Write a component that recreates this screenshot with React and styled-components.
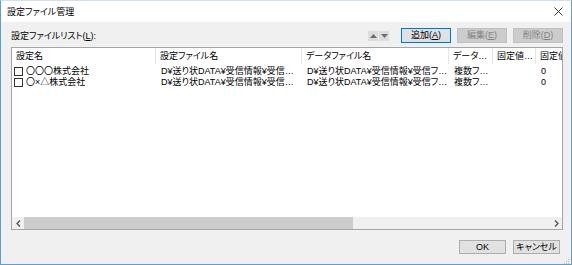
import React from 'react';
import styled, { createGlobalStyle } from 'styled-components';

const GlobalStyle = createGlobalStyle`
  html, body {
    margin: 0;
    padding: 0;
    background: #f0f0f0;
  }
  body {
    font-family: "Liberation Sans", "Noto Sans CJK JP", sans-serif;
    font-size: 9px;
    font-feature-settings: "palt";
    color: #000;
  }
`;

const columns = [
  { title: '設定名', width: 144 },
  { title: '設定ファイル名', width: 146 },
  { title: 'データファイル名', width: 147 },
  { title: 'データ選択方法', width: 44 },
  { title: '固定値区分', width: 43 },
  { title: '固定値', width: 60 },
];

const rows = [
  ['〇〇〇株式会社', 'D¥送り状DATA¥受信情報¥受信設定ファイル1.ini', 'D¥送り状DATA¥受信情報¥受信ファイル1.csv', '複数ファイル', '', '0'],
  ['〇×△株式会社', 'D¥送り状DATA¥受信情報¥受信設定ファイル2.ini', 'D¥送り状DATA¥受信情報¥受信ファイル2.csv', '複数ファイル', '', '0'],
];

const gridTemplate = columns.map((c) => `${c.width}px`).join(' ');

function App() {
  return (
    <>
      <GlobalStyle />
      <Window>
        <TitleBar>
          <Title>設定ファイル管理</Title>
          <CloseButton aria-label="閉じる">
            <svg width="9" height="9" viewBox="0 0 9 9">
              <path d="M0.5 0.5 L8.5 8.5 M8.5 0.5 L0.5 8.5" stroke="#222" strokeWidth="0.9" fill="none" />
            </svg>
          </CloseButton>
        </TitleBar>
        <Body>
          <Toolbar>
            <ListLabel>設定ファイルリスト(<u>L</u>):</ListLabel>
            <Spacer />
            <ArrowGroup>
              <ArrowButton>
                <svg width="7" height="4" viewBox="0 0 7 4"><path d="M0 4 L3.5 0 L7 4 Z" fill="#6d6d6d" /></svg>
              </ArrowButton>
              <ArrowButton>
                <svg width="7" height="4" viewBox="0 0 7 4"><path d="M0 0 L3.5 4 L7 0 Z" fill="#6d6d6d" /></svg>
              </ArrowButton>
            </ArrowGroup>
            <Button $default>追加(<u>A</u>)</Button>
            <Button disabled>編集(<u>E</u>)</Button>
            <Button disabled>削除(<u>D</u>)</Button>
          </Toolbar>
          <ListBox>
            <Viewport>
              <HeaderRow>
                {columns.map((c) => (
                  <HeaderCell key={c.title}>
                    <CellText>{c.title}</CellText>
                  </HeaderCell>
                ))}
              </HeaderRow>
              {rows.map((r) => (
                <Row key={r[0]}>
                  {r.map((v, i) => (
                    <Cell key={i} $first={i === 0}>
                      {i === 0 && <CheckBox />}
                      <CellText>{v}</CellText>
                    </Cell>
                  ))}
                </Row>
              ))}
            </Viewport>
            <HScroll>
              <ScrollArrow>
                <svg width="5" height="7" viewBox="0 0 5 7"><path d="M4 0.5 L1 3.5 L4 6.5" stroke="#505050" strokeWidth="1.3" fill="none" /></svg>
              </ScrollArrow>
              <Track>
                <Thumb />
              </Track>
              <ScrollArrow>
                <svg width="5" height="7" viewBox="0 0 5 7"><path d="M1 0.5 L4 3.5 L1 6.5" stroke="#505050" strokeWidth="1.3" fill="none" /></svg>
              </ScrollArrow>
            </HScroll>
          </ListBox>
          <Footer>
            <Button>OK</Button>
            <Button>キャンセル</Button>
          </Footer>
        </Body>
        <Grip>
          <svg width="6" height="6" viewBox="0 0 6 6">
            <rect x="4" y="0" width="1" height="1" fill="#b8b8b8" />
            <rect x="2" y="2" width="1" height="1" fill="#b8b8b8" />
            <rect x="4" y="2" width="1" height="1" fill="#b8b8b8" />
            <rect x="0" y="4" width="1" height="1" fill="#b8b8b8" />
            <rect x="2" y="4" width="1" height="1" fill="#b8b8b8" />
            <rect x="4" y="4" width="1" height="1" fill="#b8b8b8" />
          </svg>
        </Grip>
      </Window>
    </>
  );
}

export default App;

const Window = styled.div`
  position: relative;
  width: 572px;
  height: 265px;
  box-sizing: border-box;
  border: 1px solid #5a9fd8;
  border-top-color: #cfe0f0;
  background: #f0f0f0;
  display: flex;
  flex-direction: column;
  overflow: hidden;
`;

const TitleBar = styled.div`
  height: 21px;
  background: #fff;
  display: flex;
  align-items: center;
  padding: 0 6px;
`;

const Title = styled.div`
  flex: 1;
  line-height: 12px;
`;

const CloseButton = styled.div`
  width: 12px;
  height: 12px;
  display: flex;
  align-items: center;
  justify-content: center;
  margin-right: 1px;
`;

const Body = styled.div`
  flex: 1;
  display: flex;
  flex-direction: column;
  padding: 6px 8px 10px 10px;
`;

const Toolbar = styled.div`
  display: flex;
  align-items: flex-end;
  height: 15px;
  gap: 6px;
`;

const ListLabel = styled.div`
  line-height: 11px;
  margin-bottom: 1px;
`;

const Spacer = styled.div`
  flex: 1;
`;

const ArrowGroup = styled.div`
  display: flex;
  gap: 1px;
  margin-right: 6px;
  align-self: center;
`;

const ArrowButton = styled.div`
  width: 10px;
  height: 10px;
  background: #dcdcdc;
  display: flex;
  align-items: center;
  justify-content: center;
`;

const Button = styled.div`
  width: 50px;
  height: 15px;
  box-sizing: border-box;
  display: flex;
  align-items: center;
  justify-content: center;
  background: ${(p) => (p.disabled ? '#cccccc' : '#e1e1e1')};
  border: 1px solid ${(p) => (p.$default ? '#0078d7' : p.disabled ? '#bfbfbf' : '#adadad')};
  color: ${(p) => (p.disabled ? '#838383' : '#000')};
  line-height: 11px;
  white-space: nowrap;
  ${(p) => p.$default && 'box-shadow: inset 0 0 0 1px #cbe3f7;'}
`;

const ListBox = styled.div`
  flex: 1;
  margin-top: 4px;
  background: #fff;
  border: 1px solid #a5a5a5;
  display: flex;
  flex-direction: column;
  overflow: hidden;
`;

const Viewport = styled.div`
  flex: 1;
  overflow: hidden;
`;

const HeaderRow = styled.div`
  display: grid;
  grid-template-columns: ${gridTemplate};
  height: 16px;
  margin-bottom: 2px;
`;

const HeaderCell = styled.div`
  border-right: 1px solid #e5e5e5;
  padding: 1px 1px 0 4px;
  display: flex;
  align-items: center;
  min-width: 0;
  overflow: hidden;
`;

const Row = styled.div`
  display: grid;
  grid-template-columns: ${gridTemplate};
  height: 11px;
`;

const Cell = styled.div`
  display: flex;
  align-items: center;
  padding: 0 1px 0 ${(p) => (p.$first ? '2px' : '5px')};
  min-width: 0;
  overflow: hidden;
  gap: 3px;
`;

const CellText = styled.span`
  min-width: 0;
  white-space: nowrap;
  overflow: hidden;
  text-overflow: ellipsis;
  line-height: 11px;
`;

const CheckBox = styled.span`
  flex: none;
  width: 9px;
  height: 9px;
  box-sizing: border-box;
  border: 1px solid #333;
  background: #fff;
`;

const HScroll = styled.div`
  height: 12px;
  display: flex;
  background: #f0f0f0;
`;

const ScrollArrow = styled.div`
  width: 12px;
  display: flex;
  align-items: center;
  justify-content: center;
`;

const Track = styled.div`
  flex: 1;
  display: flex;
  align-items: stretch;
`;

const Thumb = styled.div`
  width: 329px;
  background: #cdcdcd;
`;

const Footer = styled.div`
  display: flex;
  justify-content: flex-end;
  gap: 7px;
  padding-top: 10px;
  padding-right: 3px;
  & > div {
    width: 47px;
    height: 14px;
  }
`;

const Grip = styled.div`
  position: absolute;
  right: 1px;
  bottom: 1px;
  width: 6px;
  height: 6px;
`;
